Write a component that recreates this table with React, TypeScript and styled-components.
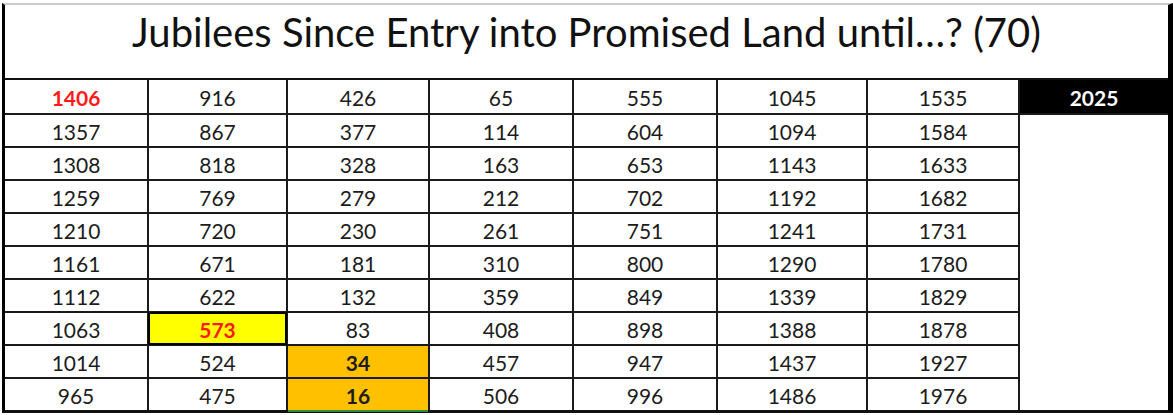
import React from "react";
import styled, { createGlobalStyle } from "styled-components";

const Global = createGlobalStyle`
  html, body { margin: 0; padding: 0; background: #ffffff; }
  body { font-family: Lato, "Open Sans", sans-serif; }
`;

const Frame = styled.div`
  margin: 3px 0 0 2px;
  width: 1171px;
  box-sizing: border-box;
  border-top: 2px solid #c9cbcd;
  border-left: 3px solid #000;
  border-right: 5px solid #000;
  border-bottom: 3px solid #111;
  background: #fff;
`;

const Title = styled.h1`
  margin: 0;
  height: 75px;
  box-sizing: border-box;
  padding-top: 3px;
  border-bottom: 2px solid #111;
  font-family: Lato, "Open Sans", sans-serif;
  font-weight: 400;
  font-size: 40px;
  line-height: 48px;
  text-align: center;
  color: #111;
`;

const Grid = styled.div`
  display: grid;
  grid-template-columns: 142px 137px 140px 142px 142px 148px 150px 148px;
  grid-template-rows: 33px repeat(9, 31px);
  gap: 2px;
  background: #1a1a1a;
`;

type Tone = "plain" | "red" | "yellow" | "orange" | "black";

const Cell = styled.div<{ $tone: Tone; $selected?: boolean }>`
  display: flex;
  align-items: center;
  justify-content: center;
  font-family: Lato, "Open Sans", sans-serif;
  font-size: 21px;
  line-height: 1;
  padding-top: 1px;
  box-sizing: border-box;
  position: relative;
  background: ${(p) =>
    p.$tone === "yellow"
      ? "#ffff00"
      : p.$tone === "orange"
      ? "#ffc000"
      : p.$tone === "black"
      ? "#000"
      : "#fff"};
  color: ${(p) =>
    p.$tone === "red" || p.$tone === "yellow"
      ? "#ff1a1a"
      : p.$tone === "black"
      ? "#fff"
      : "#1c1c1c"};
  font-weight: ${(p) => (p.$tone === "plain" ? 400 : 700)};
  box-shadow: ${(p) =>
    p.$tone === "yellow"
      ? "inset 0 0 0 1px #000, 0 0 0 1px #000"
      : p.$selected
      ? "0 2px 0 #2e8b3e"
      : "none"};
  z-index: ${(p) => (p.$tone === "yellow" || p.$selected ? 1 : 0)};
`;

const Merged = styled.div`
  grid-column: 8;
  grid-row: 2 / span 9;
  background: #fff;
`;

const columns: number[][] = [
  [1406, 1357, 1308, 1259, 1210, 1161, 1112, 1063, 1014, 965],
  [916, 867, 818, 769, 720, 671, 622, 573, 524, 475],
  [426, 377, 328, 279, 230, 181, 132, 83, 34, 16],
  [65, 114, 163, 212, 261, 310, 359, 408, 457, 506],
  [555, 604, 653, 702, 751, 800, 849, 898, 947, 996],
  [1045, 1094, 1143, 1192, 1241, 1290, 1339, 1388, 1437, 1486],
  [1535, 1584, 1633, 1682, 1731, 1780, 1829, 1878, 1927, 1976],
];

const toneFor = (c: number, r: number): Tone => {
  if (c === 0 && r === 0) return "red";
  if (c === 1 && r === 7) return "yellow";
  if (c === 2 && (r === 8 || r === 9)) return "orange";
  return "plain";
};

export default function App() {
  const cells: React.ReactNode[] = [];
  for (let r = 0; r < 10; r++) {
    for (let c = 0; c < 7; c++) {
      cells.push(
        <Cell
          key={`${r}-${c}`}
          $tone={toneFor(c, r)}
          $selected={c === 2 && r === 9}
          style={{ gridColumn: c + 1, gridRow: r + 1 }}
        >
          {columns[c][r]}
        </Cell>
      );
    }
  }
  return (
    <>
      <Global />
      <Frame>
        <Title>Jubilees Since Entry into Promised Land until…? (70)</Title>
        <Grid>
          {cells}
          <Cell $tone="black" style={{ gridColumn: 8, gridRow: 1 }}>
            2025
          </Cell>
          <Merged />
        </Grid>
      </Frame>
    </>
  );
}
